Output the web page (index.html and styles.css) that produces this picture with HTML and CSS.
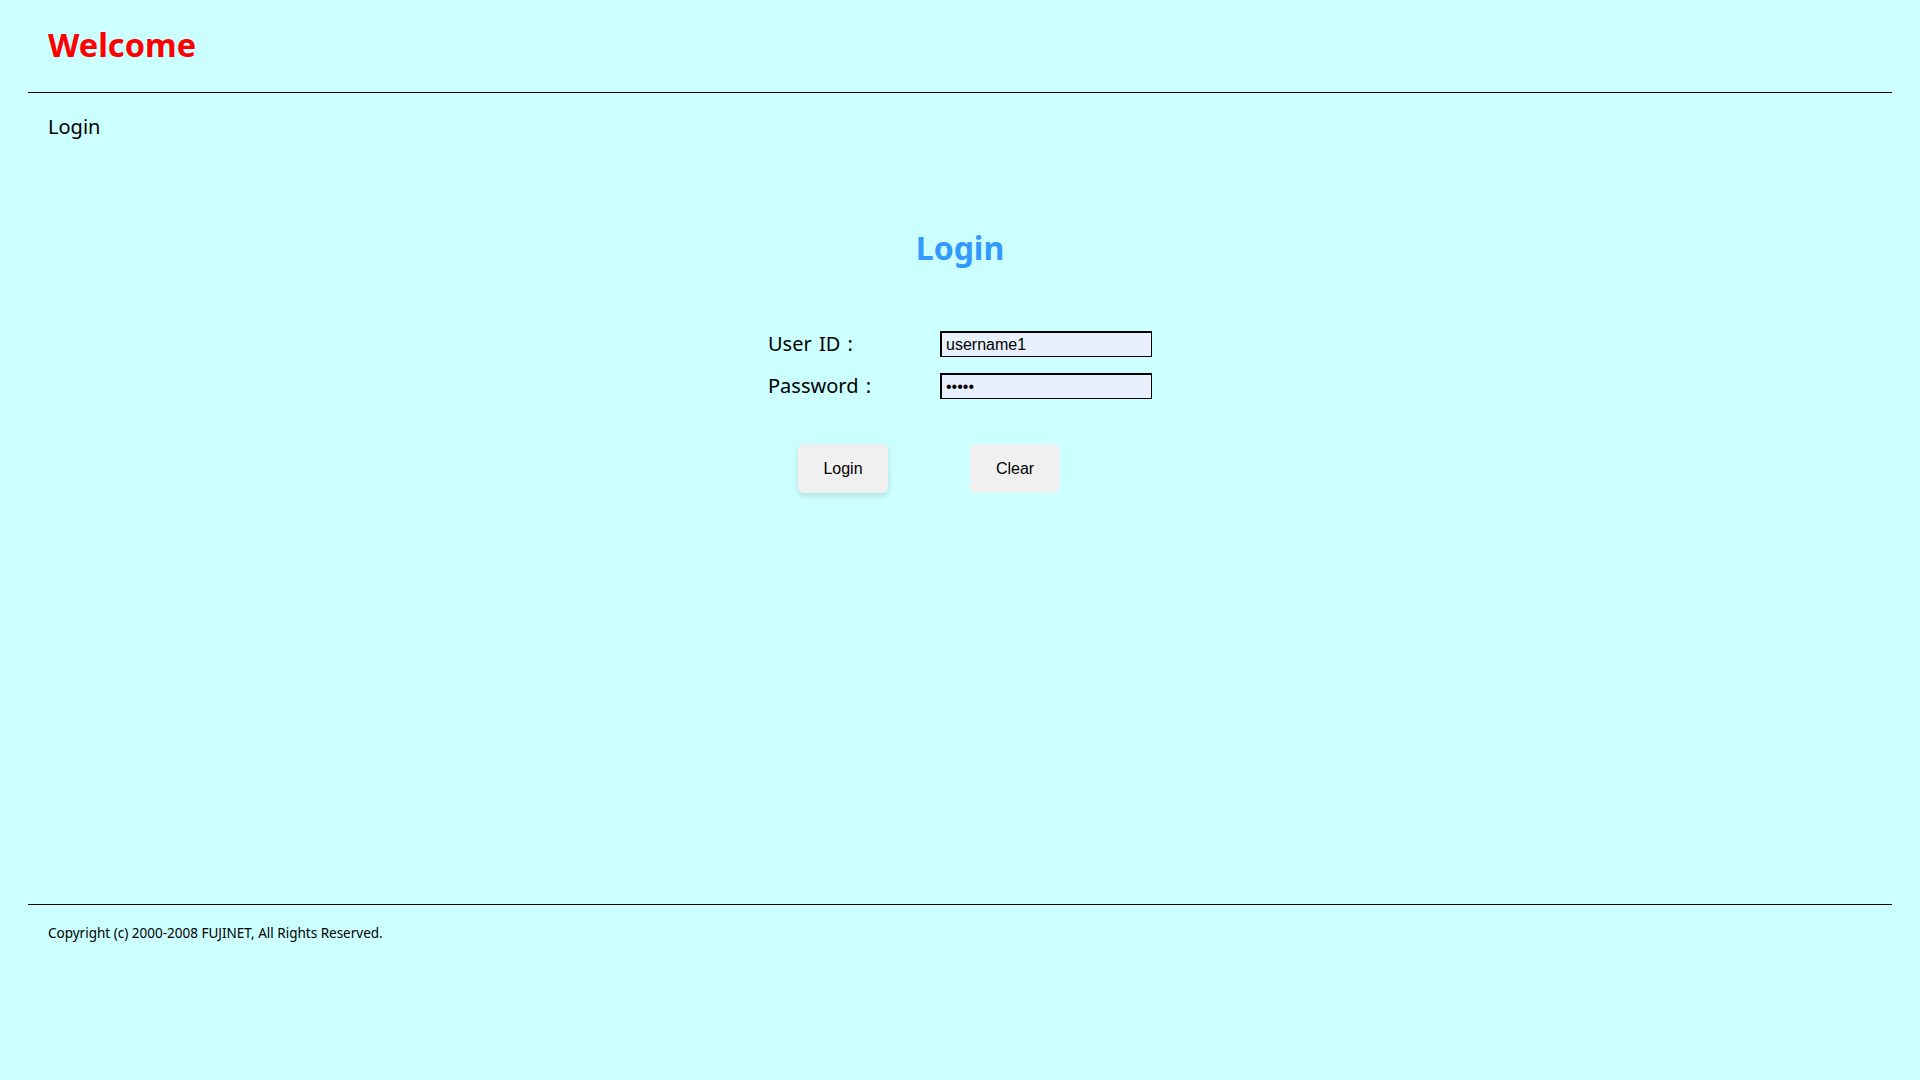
FILE: index.html
```html
<!DOCTYPE html>
<html lang="en">
<head>
<meta charset="utf-8">
<title>Login</title>
<link rel="stylesheet" href="styles.css">
</head>
<body>
<header class="header">
  <h1 class="welcome">Welcome</h1>
</header>
<div class="rule"></div>
<div class="crumb">Login</div>
<main class="main">
  <h2 class="title">Login</h2>
  <form class="form">
    <div class="fields">
      <label class="label" for="uid">User ID :</label>
      <input class="input" id="uid" type="text" value="username1">
      <label class="label" for="pwd">Password :</label>
      <input class="input" id="pwd" type="password" value="12345">
    </div>
    <div class="buttons">
      <button type="button" class="btn btn-active">Login</button>
      <button type="button" class="btn">Clear</button>
    </div>
  </form>
</main>
<div class="rule"></div>
<footer class="footer">Copyright (c) 2000-2008 FUJINET, All Rights Reserved.</footer>
</body>
</html>
```
FILE: styles.css
```css
html, body {
  margin: 0;
  padding: 0;
  background: #ccffff;
  font-family: "Noto Sans", "DejaVu Sans", sans-serif;
  color: #000;
}
.header {
  padding: 0 48px;
  height: 92px;
  box-sizing: border-box;
  padding-top: 25px;
}
.welcome {
  margin: 0;
  font-size: 32.5px;
  line-height: 40px;
  font-weight: bold;
  color: #ff0000;
}
.rule {
  margin: 0 28px;
  border-top: 1px solid #000;
  height: 0;
}
.crumb {
  padding: 0 48px;
  margin-top: 20px;
  font-size: 20px;
  line-height: 28px;
}
.main {
  height: 763px;
  box-sizing: border-box;
  padding-top: 87px;
}
.title {
  margin: 0;
  text-align: center;
  font-size: 32px;
  line-height: 40px;
  font-weight: bold;
  color: #3399ff;
}
.form {
  display: flex;
  flex-direction: column;
  align-items: center;
  margin-top: 63px;
}
.fields {
  display: grid;
  grid-template-columns: 172px 212px;
  grid-auto-rows: 26px;
  row-gap: 16px;
  align-items: center;
}
.label {
  font-size: 20px;
  line-height: 26px;
  word-spacing: 2px;
}
.input {
  box-sizing: border-box;
  width: 212px;
  height: 26px;
  margin: 0;
  padding: 0 4px;
  background: #e8f0fe;
  border-style: solid;
  border-color: #000;
  border-width: 2px 1px 1px 2px;
  font-family: "Liberation Sans", Arial, sans-serif;
  font-size: 16px;
  color: #000;
  outline: none;
}
.buttons {
  display: flex;
  gap: 82px;
  margin-top: 45px;
  margin-left: -62px;
}
.btn {
  width: 90px;
  height: 49px;
  border: none;
  border-radius: 6px;
  background: #f0f0f0;
  font-family: "Liberation Sans", Arial, sans-serif;
  font-size: 16px;
  color: #000;
  padding: 0;
}
.btn-active {
  box-shadow: 0 3px 6px rgba(0, 0, 0, 0.12);
}
.footer {
  padding: 0 48px;
  margin-top: 19px;
  font-size: 13.5px;
  line-height: 18px;
}
```
